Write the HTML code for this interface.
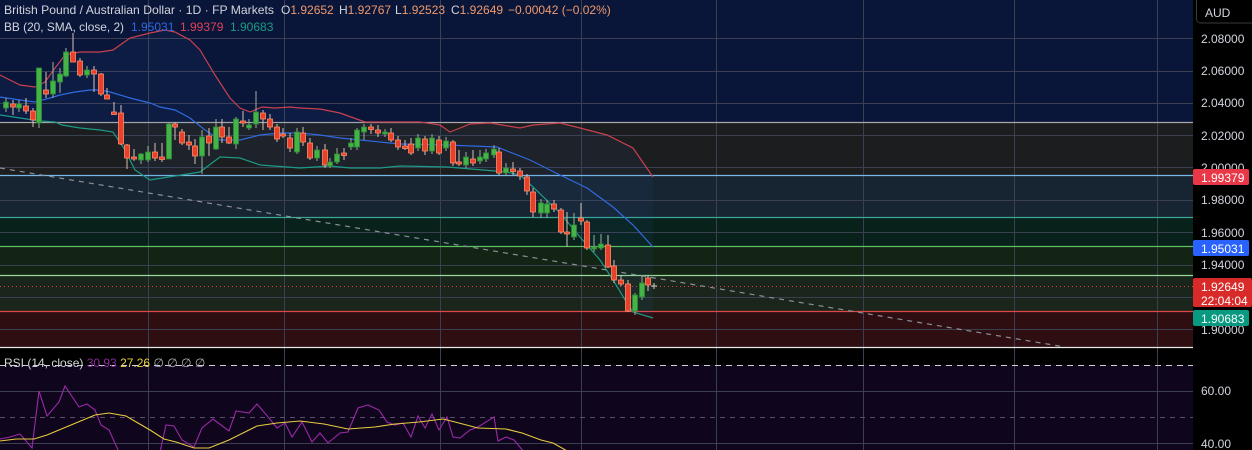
<!DOCTYPE html>
<html><head><meta charset="utf-8">
<style>
html,body{margin:0;padding:0;background:#000;width:1252px;height:450px;overflow:hidden;font-family:"Liberation Sans",sans-serif;}
svg{display:block}
</style></head><body>
<svg id="s" width="1252" height="450" xmlns="http://www.w3.org/2000/svg" font-family="Liberation Sans, sans-serif">
<rect x="0" y="0" width="1193" height="122" fill="#0a1639"/>
<rect x="0" y="122" width="1193" height="53" fill="#1c1d1f"/>
<rect x="0" y="175" width="1193" height="42" fill="#172431"/>
<rect x="0" y="217" width="1193" height="29" fill="#08211b"/>
<rect x="0" y="246" width="1193" height="29" fill="#132314"/>
<rect x="0" y="275" width="1193" height="36" fill="#1a261b"/>
<rect x="0" y="311" width="1193" height="36" fill="#2e0e11"/>
<rect x="0" y="347" width="1193" height="18" fill="#000"/>
<rect x="0" y="365" width="1193" height="85" fill="#0f051c"/>
<g id="grid" stroke="#3a3f52" stroke-width="1"></g>
<g stroke-width="1.2">
<line x1="0" y1="122.5" x2="1193" y2="122.5" stroke="#a8a8a8"/>
<line x1="0" y1="175.5" x2="1193" y2="175.5" stroke="#7ab8e8"/>
<line x1="0" y1="217.5" x2="1193" y2="217.5" stroke="#3aa898"/>
<line x1="0" y1="246.5" x2="1193" y2="246.5" stroke="#5cc05c"/>
<line x1="0" y1="275.5" x2="1193" y2="275.5" stroke="#9ad89a"/>
<line x1="0" y1="311.5" x2="1193" y2="311.5" stroke="#e04848"/>
<line x1="0" y1="347.5" x2="1252" y2="347.5" stroke="#e8e8e8"/>
</g>
<line x1="0" y1="286.5" x2="1193" y2="286.5" stroke="#e04040" stroke-dasharray="1 3"/>
<line x1="0" y1="365.5" x2="1193" y2="365.5" stroke="#d0d0d8" stroke-dasharray="6 5"/>
<line x1="0" y1="417.5" x2="1193" y2="417.5" stroke="#5a4f6a" stroke-dasharray="5 5"/>
<path id="fill" fill="#3060c0" fill-opacity="0.08"/>
<polyline id="up" fill="none" stroke="#c8404f" stroke-width="1.2"/>
<polyline id="mid" fill="none" stroke="#2f6ae0" stroke-width="1.2"/>
<polyline id="lo" fill="none" stroke="#1c9a84" stroke-width="1.2"/>
<line x1="0" y1="168" x2="1065" y2="347" stroke="#8a8f98" stroke-width="1.2" stroke-dasharray="5 5"/>
<g id="c"></g>
<polyline id="rsi" fill="none" stroke="#9a2aa8" stroke-width="1.1"/>
<polyline id="ma" fill="none" stroke="#e8cc40" stroke-width="1.1"/>
<rect x="1193" y="0" width="59" height="450" fill="#000"/>
<rect x="1196.5" y="-3" width="60" height="26" rx="4" fill="#000" stroke="#3a3a3a"/>
<text x="1205" y="17" fill="#d1d4dc" font-size="12">AUD</text>
<g fill="#d1d4dc" font-size="12">
<text x="1201" y="43">2.08000</text>
<text x="1201" y="75">2.06000</text>
<text x="1201" y="107">2.04000</text>
<text x="1201" y="140">2.02000</text>
<text x="1201" y="172">2.00000</text>
<text x="1201" y="204">1.98000</text>
<text x="1201" y="237">1.96000</text>
<text x="1201" y="269">1.94000</text>
<text x="1201" y="334">1.90000</text>
<text x="1201" y="395">60.00</text>
<text x="1201" y="448">40.00</text>
</g>
<rect x="1193" y="169" width="56" height="16" rx="2" fill="#e83848"/>
<text x="1201" y="182" fill="#fff" font-size="12">1.99379</text>
<rect x="1193" y="240" width="56" height="16" rx="2" fill="#2962ff"/>
<text x="1201" y="253" fill="#fff" font-size="12">1.95031</text>
<rect x="1193" y="278" width="59" height="29" rx="2" fill="#d92a2a"/>
<text x="1201" y="291" fill="#fff" font-size="12">1.92649</text>
<text x="1201" y="305" fill="#fff" font-size="12">22:04:04</text>
<rect x="1193" y="310" width="56" height="16" rx="2" fill="#089981"/>
<text x="1201" y="323" fill="#fff" font-size="12">1.90683</text>
<g font-size="12">
<text x="4" y="14" fill="#d1d4dc" textLength="270" lengthAdjust="spacingAndGlyphs">British Pound / Australian Dollar · 1D · FP Markets</text>
<text x="281" y="14" fill="#d1d4dc">O<tspan fill="#f09a6c">1.92652</tspan></text>
<text x="339" y="14" fill="#d1d4dc">H<tspan fill="#f09a6c">1.92767</tspan></text>
<text x="395" y="14" fill="#d1d4dc">L<tspan fill="#f09a6c">1.92523</tspan></text>
<text x="451" y="14" fill="#d1d4dc">C<tspan fill="#f09a6c">1.92649</tspan></text>
<text x="508" y="14" fill="#f09a6c">−0.00042 (−0.02%)</text>
<text x="4" y="31" fill="#d1d4dc" textLength="120" lengthAdjust="spacingAndGlyphs">BB (20, SMA, close, 2)</text>
<text x="131" y="31" fill="#2f6ae0">1.95031</text>
<text x="180" y="31" fill="#e0405a">1.99379</text>
<text x="230" y="31" fill="#1c9a84">1.90683</text>
<text x="4" y="367" fill="#d1d4dc">RSI (14, close) <tspan fill="#8a2a9a">30.93</tspan> <tspan fill="#e8d040">27.26</tspan> <tspan fill="#b0b0b8">∅ ∅ ∅ ∅</tspan></text>
</g>
</svg>
<script>
var NS="http://www.w3.org/2000/svg";
function el(t,a,p){var e=document.createElementNS(NS,t);for(var k in a)e.setAttribute(k,a[k]);p.appendChild(e);return e;}
var g=document.getElementById('grid');
[38,71,103,135,167,200,232,265,297,329,391,443].forEach(function(y){el('line',{x1:0,x2:1193,y1:y+.5,y2:y+.5},g);});
[148,284,440,581,716,863,1014,1157].forEach(function(x){el('line',{x1:x+.5,x2:x+.5,y1:0,y2:450},g);});
function pts(a){return a.map(function(p){return p.join(',')}).join(' ');}
var up=[[0,75],[20,85],[35,87],[45,82],[55,68],[65,55],[80,52],[100,52],[113,50],[130,38],[150,33],[165,30],[175,32],[190,40],[200,50],[215,75],[230,98],[240,108],[250,112],[262,107],[275,108],[290,107],[300,108],[320,109],[340,113],[365,122],[400,122],[420,122],[440,125],[450,132],[460,128],[470,124],[490,123],[520,128],[533,125],[560,123],[580,128],[607,135],[633,148],[653,177]];
var mid=[[0,97],[20,100],[35,102],[50,98],[60,95],[75,92],[90,90],[100,90],[110,92],[130,98],[150,103],[160,107],[175,110],[190,118],[205,130],[220,140],[240,140],[260,135],[280,133],[300,133],[320,135],[340,138],[360,140],[400,144],[447,145],[497,147],[530,160],[560,175],[587,188],[613,207],[633,225],[653,247]];
var lo=[[0,115],[20,118],[40,121],[55,122],[62,125],[80,128],[100,130],[113,132],[125,150],[135,170],[150,180],[200,172],[220,157],[240,158],[260,165],[300,168],[330,166],[350,168],[380,168],[400,166],[447,167],[507,172],[520,175],[533,187],[560,213],[580,237],[600,260],[613,280],[627,303],[633,312],[653,318]];
document.getElementById('up').setAttribute('points',pts(up));
document.getElementById('mid').setAttribute('points',pts(mid));
document.getElementById('lo').setAttribute('points',pts(lo));
document.getElementById('fill').setAttribute('d','M'+pts(up)+' L'+pts(lo.slice().reverse())+'Z');
var C=[[6,108,102,98,112],[13,104,107,100,115],[19,108,104,100,112],[26,106,111,98,114],[33,111,120,108,127],[39,123,68,68,128],[46,90,94,72,98],[53,94,81,62,98],[60,82,74,68,93],[66,76,52,48,77],[73,52,62,33,62],[80,61,75,58,77],[87,75,70,66,78],[94,70,74,66,92],[101,74,94,73,96],[107,95,99,88,99],[114,113,113.5,102,113],[121,113,144,105,145],[127,145,158,144,169],[134,157,159,149,161],[141,160,154,153,164],[148,160,152,146,162],[155,152,158,143,161],[162,158,158.5,143,162],[169,159,124,123,159],[175,124,127,122,140],[182,132,143,129,145],[189,143,144,135,150],[195,146,156,139,164],[202,156,137,130,174],[209,136,143,128,156],[216,149,127,119,150],[222,127,137,119,143],[229,137,143,127,144],[236,144,119,117,149],[243,121,123,111,127],[249,128,125,119,130],[256,124,112,91,128],[263,113,119,110,130],[270,119,127,114,130],[277,127,139,124,142],[283,134,136,128,138],[290,138,148,133,152],[297,152,132,128,154],[303,133,142,127,146],[310,143,158,138,160],[317,158,150,146,161],[325,150,165,144,168],[330,166,162,158,168],[337,162,154,148,164],[344,154,154.5,148,160],[351,147,143,138,150],[357,147,130,128,150],[364,132,127,124,140],[371,128,128.5,124,134],[378,130,133,125,137],[385,134,132,129,137],[391,133,140,128,142],[398,140,147,136,150],[405,147,147.5,140,150],[411,144,153,138,155],[418,148,138,134,151],[425,139,151,136,155],[432,151,138,134,154],[439,140,153,136,155],[446,148,141,137,151],[453,142,163,140,166],[459,162,164,150,166],[466,165,157,152,168],[473,159,163,150,166],[480,161,157,150,164],[486,159,153,149,162],[494,155,149,145,158],[499,152,173,148,175],[506,173,168,163,176],[513,170,170.5,162,175],[520,171,176,168,180],[527,177,191,174,195],[533,192,212,188,217],[541,213,203,199,218],[547,213,204,200,218],[554,204,209,200,212],[561,210,232,208,234],[567,232,234,212,247],[574,237,225,213,240],[581,218,221,203,225],[587,222,248,220,250],[594,249,247,235,252],[601,248,244,234,250],[608,245,267,235,268],[614,266,280,260,283],[621,280,284,275,286],[628,284,311,280,312],[635,311,295,293,315],[642,297,283,275,300],[648,278,285,276,291]];
var cg=document.getElementById('c');
C.forEach(function(d){var x=d[0],o=d[1],c=d[2],h=d[3],l=d[4];var green=c<o;
 el('line',{x1:x,x2:x,y1:h,y2:l,stroke:green?'#9ab09a':'#d8c0b8','stroke-width':1},cg);
 var t=Math.min(o,c),b=Math.max(o,c);if(b-t<1.5){t-=1;b+=1;}
 el('rect',{x:x-2.5,y:t,width:5,height:b-t,fill:green?'#44b449':'#e8402a',stroke:green?'#2e8a33':'#ff8c6a','stroke-width':0.8},cg);});
el('line',{x1:651,x2:657,y1:286,y2:286,stroke:'#ccc'},cg);el('line',{x1:654,x2:654,y1:283,y2:289,stroke:'#ccc'},cg);
var rsi=[[0,439],[10,437],[20,434],[32,448],[39,391],[47,416],[59,402],[65,386],[79,407],[87,404],[95,410],[101,425],[109,430],[119,452],[160,452],[166,425],[174,426],[182,440],[194,447],[202,428],[213,419],[229,431],[236,411],[249,413],[257,404],[269,418],[277,428],[285,423],[292,437],[302,422],[312,442],[320,433],[328,443],[340,433],[348,432],[358,408],[368,405],[379,410],[387,422],[395,425],[403,423],[411,437],[418,416],[425,428],[432,414],[439,430],[447,417],[453,437],[460,438],[470,430],[478,427],[494,417],[498,441],[506,437],[514,440],[524,452]];
var ma=[[0,441],[16,439],[34,439],[47,435],[71,425],[95,415],[109,413],[126,416],[138,423],[150,430],[164,439],[176,442],[194,448],[209,448],[229,440],[257,426],[277,423],[300,421],[324,424],[348,429],[375,427],[395,424],[419,422],[443,419],[455,422],[478,428],[506,429],[522,433],[541,440],[553,443],[569,452]];
document.getElementById('rsi').setAttribute('points',pts(rsi));
document.getElementById('ma').setAttribute('points',pts(ma));
</script>
</body></html>
